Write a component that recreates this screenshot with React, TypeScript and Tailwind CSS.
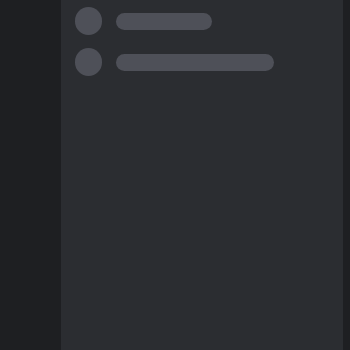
export default function App() {
  return (
    <div className="flex h-[350px] w-[350px] overflow-hidden bg-[#1e1f22]">
      <div className="w-[61px] shrink-0 bg-[#1e1f22]" />
      <div className="flex w-[282px] shrink-0 flex-col gap-[13px] bg-[#2b2d31] pl-[14px] pt-[7px]">
        <div className="flex items-center gap-[14px]">
          <div className="h-[28px] w-[27px] rounded-full bg-[#4e5058]" />
          <div className="h-[17px] w-[96px] rounded-full bg-[#4e5058]" />
        </div>
        <div className="flex items-center gap-[14px]">
          <div className="h-[28px] w-[27px] rounded-full bg-[#4e5058]" />
          <div className="h-[17px] w-[158px] rounded-full bg-[#4e5058]" />
        </div>
      </div>
      <div className="flex-1 bg-[#1e1f22]" />
    </div>
  );
}
